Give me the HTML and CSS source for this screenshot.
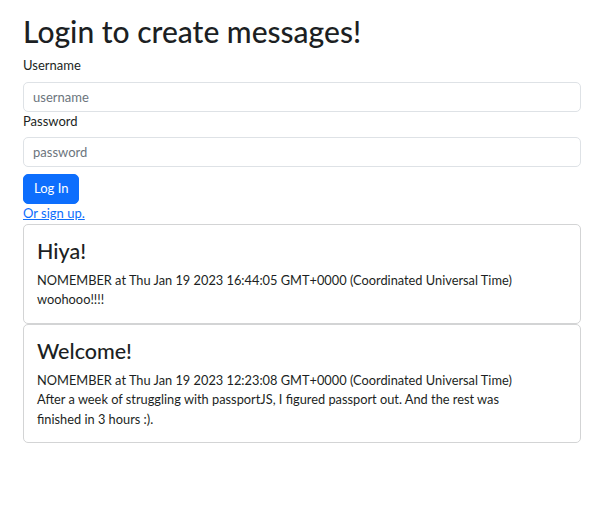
FILE: index.html
```html
<!DOCTYPE html>
<html lang="en">
<head>
<meta charset="utf-8">
<title>Messages</title>
<link rel="stylesheet" href="styles.css">
</head>
<body>
<div class="container">
  <h1 class="title">Login to create messages!</h1>
  <form class="login">
    <label class="form-label" for="username">Username</label>
    <input class="form-control" id="username" type="text" placeholder="username">
    <label class="form-label" for="password">Password</label>
    <input class="form-control" id="password" type="password" placeholder="password">
    <button class="btn" type="button">Log In</button>
  </form>
  <a class="signup" href="#">Or sign up.</a>
  <div class="messages">
    <div class="card">
      <h2 class="card-title">Hiya!</h2>
      <p class="card-text">NOMEMBER at Thu Jan 19 2023 16:44:05 GMT+0000 (Coordinated Universal Time)</p>
      <p class="card-text">woohooo!!!!</p>
    </div>
    <div class="card">
      <h2 class="card-title">Welcome!</h2>
      <p class="card-text">NOMEMBER at Thu Jan 19 2023 12:23:08 GMT+0000 (Coordinated Universal Time)</p>
      <p class="card-text narrow">After a week of struggling with passportJS, I figured passport out. And the rest was finished in 3 hours :).</p>
    </div>
  </div>
</div>
</body>
</html>
```

FILE: styles.css
```css
* { box-sizing: border-box; }
html, body { margin: 0; padding: 0; background: #fff; }
body {
  font-family: Lato, "Noto Sans", "Liberation Sans", sans-serif;
  font-size: 12.8px;
  line-height: 19.5px;
  color: #1c1f23;
}
.container { padding: 13px 19px 0 23px; }
.title {
  margin: 0 0 6px;
  font-size: 30px;
  line-height: 37px;
  font-weight: 500;
}
.login { display: flex; flex-direction: column; align-items: flex-start; }
.form-label { display: block; margin-bottom: 6px; font-size: 13px; }
.form-control {
  width: 100%;
  height: 30px;
  margin: 0;
  padding: 0 9px;
  font: inherit;
  font-size: 13px;
  color: #212529;
  border: 1px solid #dee2e6;
  border-radius: 5px;
  background: #fff;
}
.form-control::placeholder { color: #6c757d; }
.btn {
  margin-top: 7px;
  height: 30px;
  padding: 0 10px;
  font: inherit;
  font-size: 13px;
  color: #fff;
  background: #0d6efd;
  border: 1px solid #0d6efd;
  border-radius: 5px;
}
.signup { display: inline-block; color: #0d6efd; text-decoration: underline; font-size: 13px; }
.messages { display: flex; flex-direction: column; }
.card {
  border: 1px solid #d3d4d5;
  border-radius: 5px;
  padding: 12px 13px 13px;
}
.card-title {
  margin: 0 0 6px;
  font-size: 21.5px;
  line-height: 28px;
  font-weight: 500;
}
.card-text { margin: 0; }
.narrow { max-width: 490px; }
```
